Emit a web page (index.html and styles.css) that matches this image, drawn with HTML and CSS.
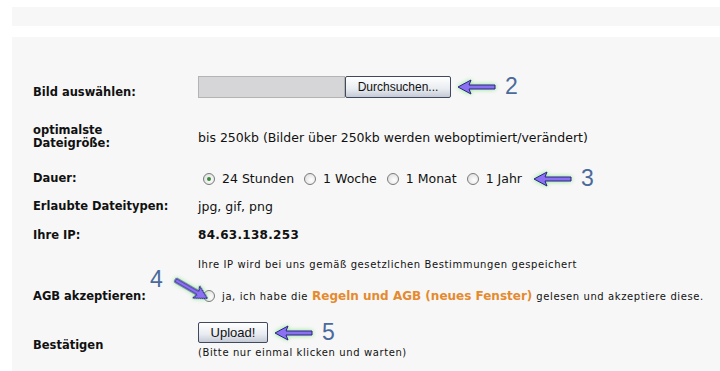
FILE: index.html
```html
<!DOCTYPE html>
<html lang="de">
<head>
  <meta charset="UTF-8">
  <title>Bild Upload</title>
  <link rel="stylesheet" href="styles.css">
</head>
<body>
  <div class="topbar"></div>

  <div class="panel">
    <!-- Bild -->
    <div class="row row-file">
      <div class="label">Bild auswählen:</div>
      <div class="value">
        <span class="file-box"></span><button class="btn btn-browse" type="button">Durchsuchen...</button>
        <span class="note">
          <svg class="arrow" width="40" height="16" viewBox="0 0 40 16"><path d="M1 8 L14 1 L12 6 L38 6 L38 10 L12 10 L14 15 Z"/></svg>
          <span class="num">2</span>
        </span>
      </div>
    </div>

    <div class="row row-size">
      <div class="label">optimalste<br>Dateigröße:</div>
      <div class="value">bis 250kb (Bilder über 250kb werden weboptimiert/verändert)</div>
    </div>

    <!-- Dauer -->
    <div class="row row-dur">
      <div class="label">Dauer:</div>
      <div class="value">
        <label class="opt"><span class="radio checked"></span>24 Stunden</label>
        <label class="opt"><span class="radio"></span>1 Woche</label>
        <label class="opt"><span class="radio"></span>1 Monat</label>
        <label class="opt"><span class="radio"></span>1 Jahr</label>
        <span class="note">
          <svg class="arrow" width="40" height="16" viewBox="0 0 40 16"><path d="M1 8 L14 1 L12 6 L38 6 L38 10 L12 10 L14 15 Z"/></svg>
          <span class="num">3</span>
        </span>
      </div>
    </div>

    <div class="row row-types">
      <div class="label">Erlaubte Dateitypen:</div>
      <div class="value">jpg, gif, png</div>
    </div>

    <div class="row row-ip">
      <div class="label">Ihre IP:</div>
      <div class="value ip">84.63.138.253</div>
    </div>

    <div class="row row-ipnote">
      <div class="label"></div>
      <div class="value small">Ihre IP wird bei uns gemäß gesetzlichen Bestimmungen gespeichert</div>
    </div>

    <!-- AGB -->
    <div class="row row-agb">
      <div class="label">AGB akzeptieren:</div>
      <div class="value small">
        <label class="opt"><span class="radio"></span>ja, ich habe die <a href="#" class="agb-link">Regeln und AGB (neues Fenster)</a> gelesen und akzeptiere diese.</label>
      </div>
      <span class="note note-4">
        <span class="num">4</span>
        <svg class="arrow arrow-diag" width="40" height="16" viewBox="0 0 40 16"><path d="M1 8 L14 1 L12 6 L38 6 L38 10 L12 10 L14 15 Z"/></svg>
      </span>
    </div>

    <div class="row row-send">
      <div class="label">Bestätigen</div>
      <div class="send">
        <div class="send-line">
          <button class="btn btn-upload" type="button">Upload!</button>
          <span class="note">
            <svg class="arrow" width="40" height="16" viewBox="0 0 40 16"><path d="M1 8 L14 1 L12 6 L38 6 L38 10 L12 10 L14 15 Z"/></svg>
            <span class="num">5</span>
          </span>
        </div>
        <div class="small">(Bitte nur einmal klicken und warten)</div>
      </div>
    </div>
  </div>
</body>
</html>
```

FILE: styles.css
```css
body {
  margin: 0;
  padding: 7px 0 0 12px;
  background: #fff;
  font-family: 'DejaVu Sans', Verdana, sans-serif;
  font-size: 12.5px;
  color: #111;
}

.topbar {
  height: 19px;
  background: #f7f7f7;
}

.panel {
  margin-top: 11px;
  background: #f7f7f7;
  padding: 36px 0 0 21px;
  box-sizing: border-box;
  height: 334px;
}

.row {
  display: grid;
  grid-template-columns: 165px 1fr;
  align-items: center;
  position: relative;
}

.label {
  font-weight: bold;
  font-size: 11.5px;
  line-height: 13px;
}

.value {
  display: flex;
  align-items: center;
  white-space: nowrap;
}

.small {
  font-size: 10px;
  letter-spacing: 0.6px;
}

/* Zeilen */
.row-file { height: 22px; }
.row-file .label { padding-top: 12px; }
.row-size { margin-top: 29px; height: 26px; }
.row-dur { margin-top: 15px; height: 16px; }
.row-types { margin-top: 17px; height: 16px; }
.row-ip { margin-top: 13px; height: 16px; }
.row-ipnote { margin-top: 14px; height: 14px; }
.row-agb { margin-top: 16px; height: 18px; }
.row-send { margin-top: 14px; align-items: start; }
.row-send .label { padding-top: 20px; }

.ip {
  font-weight: bold;
  font-size: 12px;
  letter-spacing: 0.3px;
}

/* Datei-Feld */
.file-box {
  display: inline-block;
  width: 145px;
  height: 20px;
  background: #d6d6d8;
  border: 1px solid #b4b4b4;
}

.btn {
  font-family: 'Liberation Sans', Arial, sans-serif;
  color: #111;
  border: 1px solid #404a5c;
  border-radius: 2px;
  background: linear-gradient(#ffffff, #e8ebf0 60%, #c4cad6);
  padding: 0;
  cursor: pointer;
}

.btn-browse {
  width: 106px;
  height: 22px;
  font-size: 12px;
}

.btn-upload {
  width: 70px;
  height: 21px;
  font-size: 13px;
}

/* Radios */
.opt {
  display: inline-flex;
  align-items: center;
  margin-right: 5px;
}

.radio {
  width: 12px;
  height: 12px;
  border: 1px solid #7a7a7a;
  border-radius: 50%;
  background: radial-gradient(circle at 60% 60%, #fff, #d8d8d8);
  margin: 0 7px 0 5px;
  position: relative;
  box-sizing: border-box;
}

.radio.checked::after {
  content: '';
  position: absolute;
  left: 3px;
  top: 3px;
  width: 4px;
  height: 4px;
  border-radius: 50%;
  background: #3a8a3a;
}

.row-agb .opt {
  margin: 0;
}

.agb-link {
  color: #e58a2e;
  font-weight: bold;
  font-size: 12px;
  letter-spacing: 0;
  text-decoration: none;
  margin: 0 4px;
}

/* Hinweis-Pfeile */
.note {
  display: inline-flex;
  align-items: center;
  margin-left: 6px;
}

.row-dur .note {
  margin-left: 6px;
}

.arrow path {
  fill: #8c70f4;
  stroke: #2a2480;
  stroke-width: 1;
}

.arrow {
  filter: drop-shadow(0 0 2px #7be87b);
}

.num {
  font-family: 'Liberation Sans', Arial, sans-serif;
  font-size: 23px;
  color: #4a6a9c;
  margin-left: 8px;
}

.note-4 {
  position: absolute;
  left: 111px;
  top: -26px;
}

.note-4 .num {
  margin: 0;
}

.arrow-diag {
  transform: rotate(210deg);
  margin: 20px 0 0 8px;
}

.send-line {
  display: flex;
  align-items: center;
  margin-bottom: 1px;
}
```
